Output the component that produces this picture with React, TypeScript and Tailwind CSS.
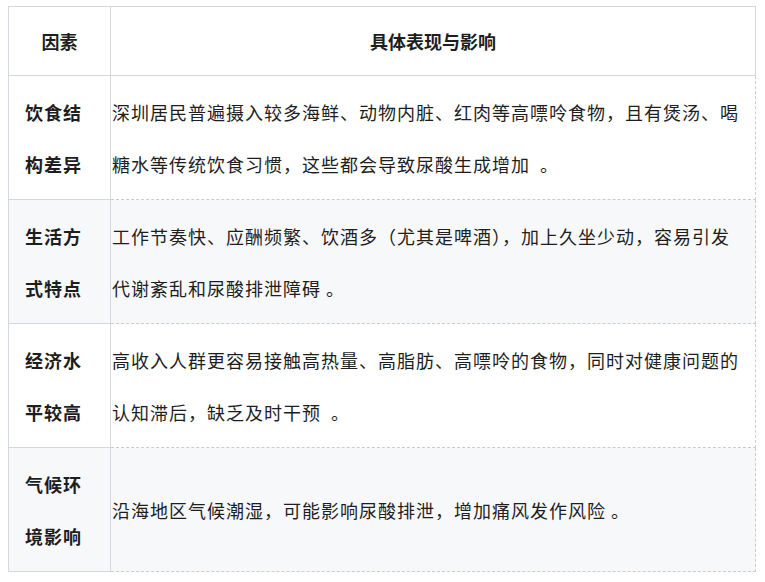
import type { ReactNode } from 'react'

const rows: { factor: string; desc: ReactNode }[] = [
  {
    factor: '饮食结构差异',
    desc: '深圳居民普遍摄入较多海鲜、动物内脏、红肉等高嘌呤食物，且有煲汤、喝糖水等传统饮食习惯，这些都会导致尿酸生成增加\u00a0 。',
  },
  {
    factor: '生活方式特点',
    desc: (
      <>
        工作节奏快、应酬频繁、饮酒多（尤其是啤酒），加上久坐少动，容易引发
        <span className="whitespace-nowrap">代谢</span>紊乱和尿酸排泄障碍 。
      </>
    ),
  },
  {
    factor: '经济水平较高',
    desc: '高收入人群更容易接触高热量、高脂肪、高嘌呤的食物，同时对健康问题的认知滞后，缺乏及时干预\u00a0 。',
  },
  {
    factor: '气候环境影响',
    desc: '沿海地区气候潮湿，可能影响尿酸排泄，增加痛风发作风险 。',
  },
]

export default function App() {
  return (
    <div className="min-h-screen bg-white pt-[6px] pl-2 font-['Noto_Sans_CJK_SC','Noto_Sans',sans-serif] text-[18px] text-[#1e1e1e]">
      <table className="w-[748px] table-fixed border-collapse">
        <thead>
          <tr>
            <th className="w-[102px] border border-solid border-[#d3d8df] py-[8px] text-center font-bold leading-[52px]">
              因素
            </th>
            <th className="border border-solid border-[#d3d8df] py-[8px] text-center font-bold leading-[52px]">
              具体表现与影响
            </th>
          </tr>
        </thead>
        <tbody>
          {rows.map((r, i) => (
            <tr key={i} className={i % 2 === 1 ? 'bg-[#f7f8fa]' : 'bg-white'}>
              <td className="border border-solid border-[#d3d8df] px-4 py-[10px] pb-[9px] align-middle font-bold leading-[52px] tracking-[1px]">
                {r.factor}
              </td>
              <td className="border border-dashed border-[#cccccc] pl-[1px] pr-0 py-[10px] pb-[9px] align-middle leading-[52px] tracking-[1px]">
                {r.desc}
              </td>
            </tr>
          ))}
        </tbody>
      </table>
    </div>
  )
}
